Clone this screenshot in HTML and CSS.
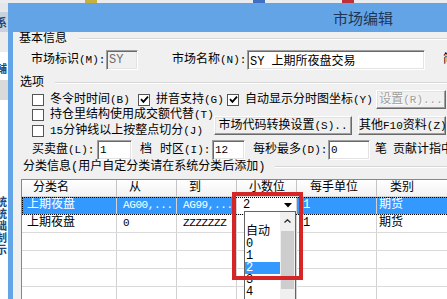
FILE: index.html
```html
<!DOCTYPE html>
<html lang="zh-CN">
<head>
  <meta charset="UTF-8">
  <meta name="viewport" content="width=device-width, initial-scale=1.0">
  <title>市场编辑</title>
  <link rel="stylesheet" href="styles.css">
</head>
<body>

<div class="taskbar">
  <span class="tb-icon tb-yellow"></span>
  <span class="tb-icon tb-blue"></span>
  <span class="tb-icon tb-red"></span>
</div>

<div class="screen">
  <div class="behind">
    <div class="bh-bar"></div>
    <div class="bh-head"><span>系</span></div>
    <div class="bh-gap"></div>
    <div class="bh-white"><span>輔</span></div>
    <div class="bh-sep"></div>
    <div class="bh-list">
      <span>统</span><span>统</span><span>础</span><span>制</span><span>示</span>
    </div>
  </div>

  <div class="dialog">
    <div class="titlebar">市场编辑</div>
    <div class="client">

      <div class="legend lg-base"><span>基本信息</span><i class="rule"></i></div>
      <div class="row row-base">
        <label class="lbl w75" for="marketId">市场标识<span class="k">(M):</span></label>
        <input class="edit w32" id="marketId" value="SY" disabled>
        <label class="lbl w75 ml34" for="marketName">市场名称<span class="k">(N):</span></label>
        <input class="edit w178" id="marketName" value="SY 上期所夜盘交易">
        <span class="lbl ml18">简称</span>
      </div>

      <div class="legend lg-opt"><span>选项</span><i class="rule"></i></div>
      <div class="row opt r1">
        <span class="check w106"><span class="box"></span><span>冬令时时间<span class="k">(B)</span></span></span>
        <span class="check w89"><span class="box"><svg width="9" height="9" viewBox="0 0 9 9"><path d="M1 4.2 L3.4 6.8 L8 1.6" fill="none" stroke="#000" stroke-width="1.8"/></svg></span><span>拼音支持<span class="k">(G)</span></span></span>
        <span class="check w149"><span class="box"><svg width="9" height="9" viewBox="0 0 9 9"><path d="M1 4.2 L3.4 6.8 L8 1.6" fill="none" stroke="#000" stroke-width="1.8"/></svg></span><span>自动显示分时图坐标<span class="k">(Y)</span></span></span>
        <button class="btn w70" disabled>设置<span class="k">(R)...</span></button>
      </div>
      <div class="row opt r2">
        <span class="check"><span class="box"></span><span>持仓里结构使用成交额代替<span class="k">(T)</span></span></span>
      </div>
      <div class="row opt r3">
        <span class="check w182"><span class="box"></span><span><span class="k">15</span>分钟线以上按整点切分<span class="k">(J)</span></span></span>
        <button class="btn w138 lift">市场代码转换设置<span class="k">(S)..</span></button>
        <button class="btn w88 ml6 lift">其他<span class="k">F10</span>资料<span class="k">(Z)</span></button>
      </div>
      <div class="row opt r4">
        <label class="lbl w65" for="depth">买卖盘<span class="k">(L):</span></label>
        <input class="edit num w35" id="depth" value="1">
        <span class="lbl w20 ml8">档</span>
        <label class="lbl w52" for="zone">时区<span class="k">(I):</span></label>
        <input class="edit num w33" id="zone" value="12">
        <label class="lbl w75 ml8" for="perSec">每秒最多<span class="k">(D):</span></label>
        <input class="edit num w42" id="perSec" value="0">
        <span class="lbl w18 ml5">笔</span>
        <span class="lbl">贡献计指中</span>
      </div>

      <div class="legend lg-cat"><span>分类信息(用户自定分类请在系统分类后添加)</span><i class="rule"></i></div>

      <div class="grid">
        <div class="grow ghead">
          <span class="c1">分类名</span><span class="c2">从</span><span class="c3">到</span><span class="c4">小数位</span><span class="c5">每手单位</span><span class="c6">类别</span>
        </div>
        <div class="grow sel">
          <span class="c1">上期夜盘</span><span class="c2 code">AG00,...</span><span class="c3 code">AG99,...</span>
          <span class="c4 combo">2<svg width="8" height="5" viewBox="0 0 8 5"><path d="M0 0 H8 L4 4.5 Z" fill="#000"/></svg></span>
          <span class="c5">1</span><span class="c6">期货</span>
        </div>
        <div class="grow">
          <span class="c1">上期夜盘</span><span class="c2 code">0</span><span class="c3 code">ZZZZZZZ</span>
          <span class="c4"></span><span class="c5">1</span><span class="c6">期货</span>
        </div>
        <div class="grow"><span class="c1"></span><span class="c2"></span><span class="c3"></span><span class="c4"></span><span class="c5"></span><span class="c6"></span></div>
        <div class="grow"><span class="c1"></span><span class="c2"></span><span class="c3"></span><span class="c4"></span><span class="c5"></span><span class="c6"></span></div>
        <div class="grow"><span class="c1"></span><span class="c2"></span><span class="c3"></span><span class="c4"></span><span class="c5"></span><span class="c6"></span></div>
        <div class="grow"><span class="c1"></span><span class="c2"></span><span class="c3"></span><span class="c4"></span><span class="c5"></span><span class="c6"></span></div>

        <div class="droplist">
          <div class="items">
            <div></div>
            <div>自动</div>
            <div>0</div>
            <div>1</div>
            <div class="hl">2</div>
            <div>3</div>
            <div>4</div>
          </div>
          <div class="vscroll">
            <div class="up"><svg width="7" height="4" viewBox="0 0 7 4"><path d="M0.5 3.5 L3.5 0.8 L6.5 3.5" fill="none" stroke="#333" stroke-width="1.4"/></svg></div>
            <div class="thumb"></div>
          </div>
        </div>
        <div class="mark"></div>
      </div>

    </div>
  </div>
</div>

</body>
</html>
```

FILE: styles.css
```css
* {
  box-sizing: border-box;
}

body {
  margin: 0;
  width: 447px;
  height: 299px;
  overflow: hidden;
  font-family: "Liberation Mono", "Noto Sans CJK SC", monospace;
  font-size: 12px;
  line-height: 14px;
  color: #000;
  background: #e9ebef;
}

/* latin part of a label, half the width of a hanzi */
.k {
  font-size: 11px;
}

/* strip of the window behind */
.taskbar {
  height: 3px;
  display: flex;
  background: #e9ebef;
}

.tb-icon {
  width: 12px;
  height: 3px;
}

.tb-yellow { margin-left: 85px; background: #c7b03c; }
.tb-blue { margin-left: 156px; background: #3f6fc4; }
.tb-red { margin-left: 77px; background: #c0303a; }

.screen {
  display: flex;
  height: 296px;
}

.behind {
  width: 8px;
  flex: none;
  overflow: hidden;
  background: #fff;
  color: #24467a;
  font-family: "Noto Sans CJK SC", sans-serif;
  font-size: 11px;
  font-weight: bold;
}

.behind span {
  display: block;
  height: 12px;
  line-height: 12px;
  margin-left: -4px;
}

.bh-bar { height: 9px; background: #e4e6ea; }
.bh-head { height: 20px; padding-top: 4px; background: #c9d1dc; }
.bh-gap { height: 20px; background: #ececec; }
.bh-white { height: 28px; padding-top: 10px; }
.bh-sep { height: 20px; background: #dadada; }
.bh-list { padding-top: 95px; }

/* dialog */
.dialog {
  flex: 1;
  min-width: 0;
  display: flex;
  flex-direction: column;
  padding-left: 5px;
  background: #63a4e6;
}

.titlebar {
  height: 29px;
  line-height: 30px;
  padding-left: 320px;
  font-family: "Noto Sans CJK SC", sans-serif;
  font-size: 15px;
  color: #1e3656;
}

.client {
  flex: 1;
  overflow: hidden;
  background: #f0f0f0;
}

.legend {
  display: flex;
  align-items: center;
  height: 14px;
  white-space: nowrap;
}

.legend .rule {
  flex: 1;
  height: 2px;
  border-top: 1px solid #d5d5d5;
  border-bottom: 1px solid #fff;
}

.lg-base { padding-left: 6px; }
.lg-base .rule { margin-left: 12px; }
.lg-opt { margin-top: 6px; padding-left: 7px; }
.lg-opt .rule { margin-left: 11px; }
.lg-cat { padding-left: 10px; }
.lg-cat .rule { margin-left: 10px; }

.row {
  display: flex;
  align-items: center;
  white-space: nowrap;
}

.row > * {
  flex: none;
}

.row-base {
  height: 20px;
  margin-top: 4px;
  padding-left: 18px;
}

.opt { padding-left: 19px; }
.r1 { height: 19px; }
.r2 { height: 12px; }
.r3 { height: 19px; }
.r4 { height: 20px; }

.lbl {
  white-space: nowrap;
}

.check {
  display: flex;
  align-items: center;
  gap: 6px;
}

.box {
  width: 12px;
  height: 12px;
  flex: none;
  display: flex;
  align-items: center;
  justify-content: center;
  border: 1px solid #555;
  background: #fff;
}

.edit {
  height: 20px;
  margin: 0;
  padding: 0 0 0 2px;
  font: inherit;
  color: #000;
  background: #fff;
  border: 1px solid;
  border-color: #a0a0a0 #fff #fff #a0a0a0;
  box-shadow: inset 1px 1px 0 #696969, inset -1px -1px 0 #e3e3e3;
  outline: none;
}

.edit.num {
  font-size: 11px;
}

.edit:disabled {
  color: #6d6d6d;
  background: #f0f0f0;
}

.btn {
  height: 19px;
  margin: 0;
  padding: 0;
  font: inherit;
  line-height: 16px;
  white-space: nowrap;
  text-align: center;
  color: #000;
  background: #f0f0f0;
  border: 1px solid;
  border-color: #fff #696969 #696969 #fff;
  box-shadow: inset -1px -1px 0 #a0a0a0, inset 1px 1px 0 #e3e3e3;
}

.btn:disabled {
  color: #a0a0a0;
  text-shadow: 1px 1px 0 #fff;
}

.lift { margin-bottom: 10px; }

.w18 { width: 18px; }
.w20 { width: 20px; }
.w32 { width: 32px; }
.w33 { width: 33px; }
.w35 { width: 35px; }
.w42 { width: 42px; }
.w52 { width: 52px; }
.w65 { width: 65px; }
.w70 { width: 70px; }
.w75 { width: 75px; }
.w88 { width: 88px; }
.w89 { width: 89px; }
.w106 { width: 106px; }
.w138 { width: 138px; }
.w149 { width: 149px; }
.w178 { width: 178px; }
.w182 { width: 182px; }
.ml5 { margin-left: 5px; }
.ml6 { margin-left: 6px; }
.ml8 { margin-left: 8px; }
.ml18 { margin-left: 18px; }
.ml34 { margin-left: 34px; }

/* category list */
.grid {
  position: relative;
  width: 440px;
  margin: 5px 0 0 8px;
  background: #fff;
  border-left: 1px solid #828790;
  border-top: 1px solid #828790;
}

.grow {
  display: flex;
  height: 18px;
  line-height: 17px;
  border-bottom: 1px solid #dadada;
}

.grow > span {
  flex: none;
  height: 17px;
  overflow: hidden;
  white-space: nowrap;
  padding-left: 6px;
  border-right: 1px solid #d2d2d2;
}

.grow > .c1 { width: 95px; padding-left: 5px; }
.grow > .c2, .grow > .c3, .grow > .c4 { width: 60px; }
.grow > .c5 { width: 80px; }
.grow > .c6 { flex: 1; padding-left: 2px; border-right: none; }

.grow > .code {
  font-size: 11px;
  letter-spacing: -0.4px;
}

.ghead {
  height: 17px;
  line-height: 16px;
  background: linear-gradient(#fff, #f2f2f2);
  border-bottom-color: #d5d5d5;
}

.ghead > span {
  height: 16px;
  padding-left: 12px;
  border-right-color: #c4c4c4;
}

.ghead > .c1 { padding-left: 11px; }
.ghead > .c5, .ghead > .c6 { padding-left: 13px; }

.sel {
  color: #fff;
  background: #3399ff;
  outline: 1px dotted #000;
  outline-offset: -1px;
}

.sel > .combo {
  display: flex;
  align-items: center;
  justify-content: space-between;
  padding-right: 4px;
  color: #000;
  background: #fff;
}

.droplist {
  position: absolute;
  left: 222px;
  top: 31px;
  width: 52px;
  height: 100px;
  display: flex;
  background: #fff;
  border: 1px solid #646464;
}

.items {
  flex: 1;
  padding-top: 2px;
  line-height: 12px;
}

.items div {
  height: 12px;
  padding-left: 1px;
}

.items .hl {
  color: #fff;
  background: #3399ff;
}

.vscroll {
  width: 15px;
  background: #f0f0f0;
}

.vscroll .up {
  height: 18px;
  display: flex;
  align-items: center;
  justify-content: center;
}

.vscroll .thumb {
  height: 58px;
  margin: 1px 1px 0;
  background: #cdcdcd;
}

.mark {
  position: absolute;
  left: 210px;
  top: 12px;
  width: 71px;
  height: 88px;
  border: 4px solid #d42626;
}
```
